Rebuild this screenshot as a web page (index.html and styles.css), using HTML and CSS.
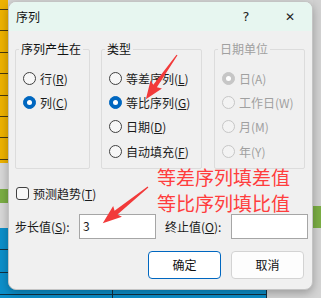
FILE: index.html
```html
<!DOCTYPE html>
<html lang="zh-CN">
<head>
    <meta charset="UTF-8">
    <title>序列</title>
    <link rel="stylesheet" href="styles.css">
</head>
<body>
    <div class="sheet">
        <div class="sheet-top">
            <div class="col-left">
                <div class="cell-yellow"></div>
                <div class="cell-gray"></div>
                <div class="cell-green short"></div>
                <div class="cell-gray"></div>
            </div>
            <div class="col-mid"></div>
            <div class="col-right">
                <div class="cell-gray"></div>
                <div class="cell-green"></div>
            </div>
        </div>
        <div class="sheet-bottom">
            <div class="cell-blue">
                <div class="blue-a"></div>
                <div class="blue-b"></div>
            </div>
            <div class="cell-rest"></div>
        </div>
    </div>

    <div class="dialog">
        <div class="titlebar">
            <span class="title">序列</span>
            <span class="title-btn">?</span>
            <span class="title-btn close">&#x2715;</span>
        </div>

        <div class="dialog-body">
            <div class="groups">
                <fieldset class="group g1">
                    <legend>序列产生在</legend>
                    <div class="opt"><span class="radio"></span>行(<u>R</u>)</div>
                    <div class="opt"><span class="radio on"></span>列(<u>C</u>)</div>
                </fieldset>
                <fieldset class="group g2">
                    <legend>类型</legend>
                    <div class="opt"><span class="radio"></span>等差序列(<u>L</u>)</div>
                    <div class="opt"><span class="radio on"></span>等比序列(<u>G</u>)</div>
                    <div class="opt"><span class="radio"></span>日期(<u>D</u>)</div>
                    <div class="opt"><span class="radio"></span>自动填充(<u>F</u>)</div>
                </fieldset>
                <fieldset class="group g3 disabled">
                    <legend>日期单位</legend>
                    <div class="opt"><span class="radio on"></span>日(A)</div>
                    <div class="opt"><span class="radio"></span>工作日(W)</div>
                    <div class="opt"><span class="radio"></span>月(M)</div>
                    <div class="opt"><span class="radio"></span>年(Y)</div>
                </fieldset>
            </div>

            <div class="check-row">
                <span class="checkbox"></span>预测趋势(<u>T</u>)
            </div>

            <div class="field-row">
                <label>步长值(<u>S</u>):</label>
                <div class="input">3</div>
                <span></span>
                <label>终止值(<u>O</u>):</label>
                <div class="input"></div>
            </div>

            <div class="buttons">
                <button class="btn primary">确定</button>
                <button class="btn">取消</button>
            </div>
        </div>

        <div class="note">等差序列填差值<br>等比序列填比值</div>
    </div>

    <svg class="arrows" width="321" height="298" viewBox="0 0 321 298">
        <polygon transform="translate(177 55) rotate(125.2)" points="0,-0.6 38,-2.2 36,-7 54,0 36,7 38,2.2 0,0.6" fill="#f23a3a"/>
        <polygon transform="translate(148 187) rotate(141.3)" points="0,-0.6 41,-2.3 39,-7 58,0 39,7 41,2.3 0,0.6" fill="#f23a3a"/>
    </svg>
</body>
</html>
```

FILE: styles.css
```css
* {
    margin: 0;
    padding: 0;
    box-sizing: border-box;
}

body {
    width: 321px;
    height: 298px;
    overflow: hidden;
    position: relative;
    font-family: "Noto Sans CJK SC", "Noto Sans", sans-serif;
    font-size: 12px;
    color: #1a1a1a;
    background: #d6d6d6;
}

/* feuille de calcul derrière la boîte */
.sheet {
    position: absolute;
    inset: 0;
    display: flex;
    flex-direction: column;
}

.sheet-top {
    display: flex;
    height: 228px;
}

.col-left,
.col-right {
    width: 8px;
    display: flex;
    flex-direction: column;
}

.col-mid {
    flex: 1;
}

.cell-yellow {
    height: 163px;
    background: repeating-linear-gradient(to bottom, #eeb200 0, #eeb200 9px, #4a3a10 9px, #4a3a10 10px, #eeb200 10px, #eeb200 21.4px);
}

.cell-gray {
    flex: 1;
    background: #d8d8d8;
}

.col-right .cell-gray {
    height: 206px;
    flex: none;
    background: #d2d2d2;
}

.cell-green {
    height: 22px;
    background: #7bae44;
}

.cell-green.short {
    height: 14px;
}

.sheet-bottom {
    flex: 1;
    display: flex;
}

.cell-blue {
    width: 267px;
    display: flex;
    background: repeating-linear-gradient(to bottom, #0c8fca 0, #0c8fca 21.5px, #123040 21.5px, #123040 22.5px);
}

.blue-a {
    width: 113px;
    border-right: 1px solid #123040;
}

.blue-b {
    flex: 1;
    border-right: 1px solid #123040;
}

.cell-rest {
    flex: 1;
    background: #d4d4d4;
}

/* boîte de dialogue */
.dialog {
    position: absolute;
    left: 8px;
    top: 1px;
    width: 305px;
    height: 289px;
    background: #f0f0f0;
    border: 1px solid #c4c4c4;
    border-radius: 8px;
    overflow: hidden;
    box-shadow: 0 3px 10px rgba(0, 0, 0, 0.28);
}

.titlebar {
    height: 29px;
    display: flex;
    align-items: center;
    background: #e7f6f0;
    padding-left: 7px;
}

.title {
    flex: 1;
    font-size: 12px;
    color: #111;
}

.title-btn {
    width: 44px;
    text-align: center;
    font-family: "DejaVu Sans", sans-serif;
    font-size: 13px;
    color: #222;
}

.title-btn.close {
    font-size: 12px;
}

.dialog-body {
    padding: 11px 7px 0 6px;
}

.groups {
    display: flex;
    align-items: stretch;
    gap: 11px;
}

.group {
    border: 1px solid #dcdcdc;
    border-radius: 2px;
    padding: 10px 4px 4px 7px;
    display: flex;
    flex-direction: column;
}

.g1 { width: 75px; }
.g2 { width: 101px; margin-right: 1px; }
.g3 { width: 91px; }

.group legend {
    padding: 0 2px;
    margin-left: -4px;
    line-height: 14px;
    color: #111;
}

.opt {
    height: 24.4px;
    display: flex;
    align-items: center;
    white-space: nowrap;
}

.opt u,
.check-row u,
.field-row u {
    text-underline-offset: 1px;
}

.radio {
    width: 13px;
    height: 13px;
    border: 1px solid #404040;
    border-radius: 50%;
    background: #f7f7f7;
    margin-right: 4px;
    flex: none;
    position: relative;
}

.radio.on {
    border-color: #0067c0;
    background: #0067c0;
}

.radio.on::after {
    content: "";
    position: absolute;
    left: 3px;
    top: 3px;
    width: 5px;
    height: 5px;
    border-radius: 50%;
    background: #fff;
}

.disabled legend,
.disabled .opt {
    color: #a0a0a0;
}

.disabled .radio {
    border-color: #c6c6c6;
    background: #f3f3f3;
}

.disabled .radio.on {
    border-color: #c6c6c6;
    background: #c6c6c6;
}

.check-row {
    margin-top: 15px;
    height: 20px;
    display: flex;
    align-items: center;
    padding-left: 1px;
}

.checkbox {
    width: 13px;
    height: 13px;
    border: 1px solid #404040;
    border-radius: 3px;
    background: #f7f7f7;
    margin-right: 4px;
}

.field-row {
    margin-top: 10px;
    display: grid;
    grid-template-columns: 64px 77px 9px 66px 77px;
    align-items: center;
}

.input {
    height: 25px;
    background: #fff;
    border: 1px solid #a6a6a6;
    padding: 3px 3px;
    line-height: 16px;
}

.buttons {
    margin-top: 12px;
    display: flex;
    justify-content: flex-end;
    gap: 10px;
    padding-right: 1px;
}

.btn {
    width: 73px;
    height: 28px;
    font-family: inherit;
    font-size: 12px;
    color: #111;
    background: #fdfdfd;
    border: 1px solid #d3d3d3;
    border-radius: 4px;
}

.btn.primary {
    border-color: #0067c0;
    background: #fff;
}

/* annotation rouge */
.note {
    position: absolute;
    left: 148px;
    top: 162px;
    font-size: 19px;
    line-height: 25.5px;
    color: #ff3d3d;
    white-space: nowrap;
}

.arrows {
    position: absolute;
    left: 0;
    top: 0;
    pointer-events: none;
}
```
